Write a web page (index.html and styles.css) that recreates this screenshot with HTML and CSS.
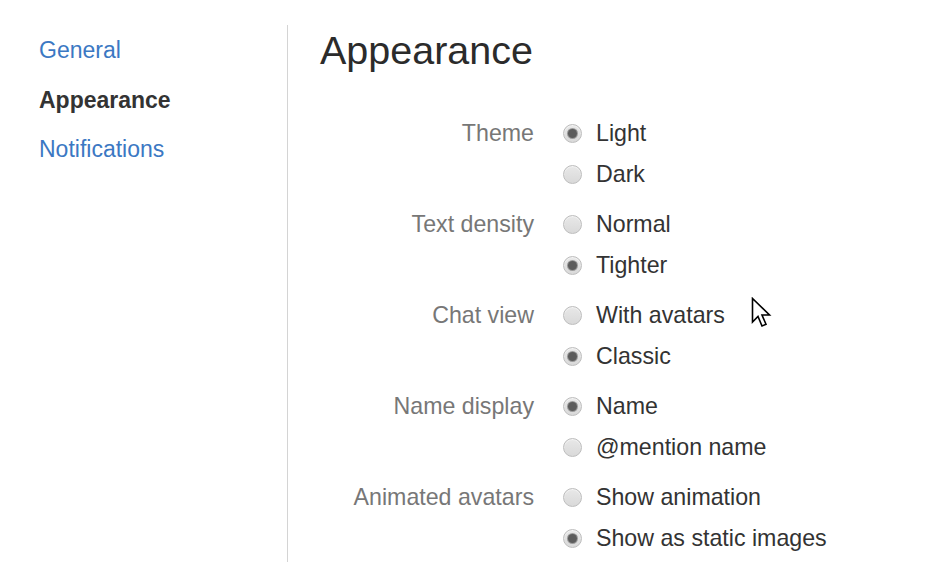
FILE: index.html
```html
<!DOCTYPE html>
<html>
<head>
<meta charset="utf-8">
<link rel="stylesheet" href="styles.css">
</head>
<body>
<div class="page">
  <nav class="sidebar">
    <a class="nav-link">General</a>
    <span class="nav-link active">Appearance</span>
    <a class="nav-link">Notifications</a>
  </nav>
  <main class="content">
    <h1 class="title">Appearance</h1>
    <div class="form">
      <div class="group">
        <div class="label">Theme</div>
        <div class="options">
          <div class="option"><span class="radio checked"></span>Light</div>
          <div class="option"><span class="radio"></span>Dark</div>
        </div>
      </div>
      <div class="group">
        <div class="label">Text density</div>
        <div class="options">
          <div class="option"><span class="radio"></span>Normal</div>
          <div class="option"><span class="radio checked"></span>Tighter</div>
        </div>
      </div>
      <div class="group">
        <div class="label">Chat view</div>
        <div class="options">
          <div class="option"><span class="radio"></span>With avatars</div>
          <div class="option"><span class="radio checked"></span>Classic</div>
        </div>
      </div>
      <div class="group">
        <div class="label">Name display</div>
        <div class="options">
          <div class="option"><span class="radio checked"></span>Name</div>
          <div class="option"><span class="radio"></span>@mention name</div>
        </div>
      </div>
      <div class="group">
        <div class="label">Animated avatars</div>
        <div class="options">
          <div class="option"><span class="radio"></span>Show animation</div>
          <div class="option"><span class="radio checked"></span>Show as static images</div>
        </div>
      </div>
    </div>
  </main>
</div>
<svg class="cursor" width="24" height="34" viewBox="0 0 24 34">
  <path d="M1.5 1.5 L1.5 25 L7 19.5 L11 29 L15 27.3 L11 18 L18.5 18 Z" fill="#fff" stroke="#000" stroke-width="1.6" stroke-linejoin="miter"/>
</svg>
</body>
</html>
```
FILE: styles.css
```css
html, body {
  margin: 0;
  padding: 0;
  background: #fff;
}
body {
  font-family: "Liberation Sans", Arial, sans-serif;
  width: 942px;
  height: 586px;
  position: relative;
  overflow: hidden;
}
.page {
  display: flex;
  padding-top: 25px;
}
.sidebar {
  width: 248px;
  padding-left: 39px;
  display: flex;
  flex-direction: column;
  padding-top: 12px;
}
.nav-link {
  font-size: 23px;
  line-height: 27px;
  height: 49.5px;
  color: #3b78c3;
}
.nav-link.active {
  color: #333;
  font-weight: bold;
}
.content {
  border-left: 1px solid #d4d4d4;
  height: 537px;
  padding-left: 32px;
  flex: 1;
}
.title {
  margin: 0;
  font-weight: normal;
  font-size: 39.5px;
  line-height: 48px;
  color: #2b2b2b;
  padding-top: 1px;
}
.form {
  margin-top: 39px;
  display: flex;
  flex-direction: column;
  gap: 9px;
}
.group {
  display: flex;
}
.label {
  width: 214px;
  text-align: right;
  font-size: 23.2px;
  line-height: 41px;
  color: #777;
}
.options {
  margin-left: 29px;
  display: flex;
  flex-direction: column;
}
.option {
  display: flex;
  align-items: center;
  height: 41px;
  font-size: 23.2px;
  color: #333;
}
.radio {
  width: 17px;
  height: 17px;
  border-radius: 50%;
  border: 1px solid #bdbdbd;
  background: linear-gradient(#e8e8e8, #d9d9d9);
  box-sizing: content-box;
  margin-right: 14px;
  position: relative;
  box-shadow: inset 0 1px 1px rgba(255,255,255,0.6);
}
.radio.checked::after {
  content: "";
  position: absolute;
  left: 4px;
  top: 4px;
  width: 9px;
  height: 9px;
  border-radius: 50%;
  background: #5c5c5c;
  box-shadow: 0 0 0 1px #9a9a9a;
}
.cursor {
  position: absolute;
  left: 751px;
  top: 297px;
}
```
